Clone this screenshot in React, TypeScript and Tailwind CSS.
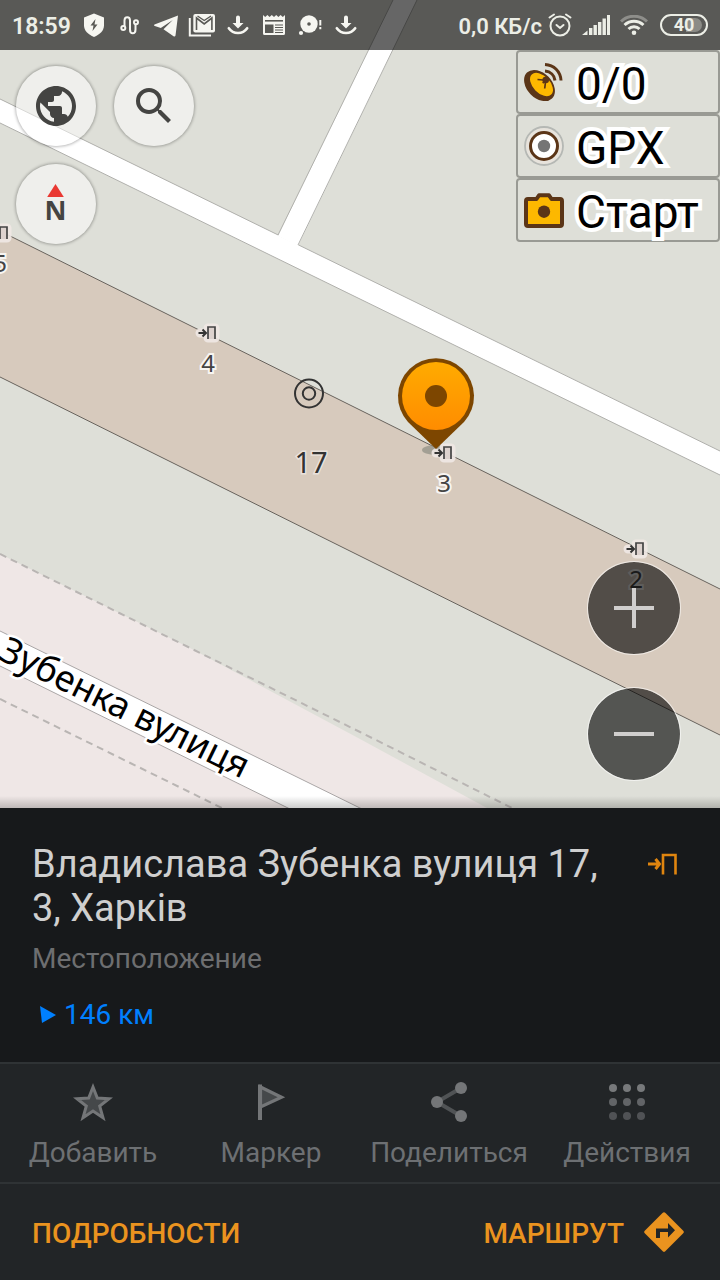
import React from 'react';
import { MdPublic, MdSearch } from 'react-icons/md';

const Icons = {
  Shield: () => <svg className="w-7 h-7" viewBox="0 0 28 28"><path d="M14 2.500l10 4v8c0 5-4 9-10 11.500C8 23.500 4 19.500 4 14.500v-8z" fill="#f6f6f1" /><path d="M15.500 8l-5 6.500h3L12.500 20l5-6.500h-3z" fill="#595955" /></svg>,
  Route: () => <svg className="w-7 h-7" viewBox="0 0 28 28" fill="none" stroke="#f6f6f1" strokeWidth="2"><circle cx="7.300" cy="17" r="2" /><path d="M8.500 15V9.500c0-4.500 5.500-4.500 5.500 0v9c0 5 5.500 5 5.500 0V13" /><circle cx="20" cy="11.300" r="2" /></svg>,
  Telegram: () => <svg className="w-7 h-7" viewBox="0 0 28 28"><path d="M26 4.500L2.500 13.500c-.8.500-.5 1.300.3 1.600l6 1.900 12-8.100-9.300 9.300 10 7c1 .6 1.700.3 2-.8z" fill="#f6f6f1" /></svg>,
  Mail: () => (
    <svg className="w-7 h-7" viewBox="0 0 28 28" fill="none">
      <path d="M1.800 7v17.600H23" stroke="#f6f6f1" strokeWidth="2" />
      <rect x="5.300" y="3" width="21.700" height="18.500" rx="2" fill="#f6f6f1" />
      <path d="M8.500 19V7l7.700 6 7.700-6V19" stroke="#595955" strokeWidth="1.600" />
      <path d="M9.500 5l6.700 4.500L23 5" stroke="#595955" strokeWidth="1.400" />
    </svg>
  ),
  Download: () => <svg className="w-7 h-7" viewBox="0 0 28 28"><path d="M12 6.500a2 2 0 0 1 4 0V12h3.500L14 17.500 8.500 12H12z" fill="#f6f6f1" /><path d="M4.800 17.200c4.500 6.300 13.900 6.300 18.400 0" fill="none" stroke="#f6f6f1" strokeWidth="2.600" strokeLinecap="round" /></svg>,
  News: () => (
    <svg className="w-7 h-7" viewBox="0 0 28 28">
      <path d="M3 4l2.200 2L7.400 4l2.200 2 2.200-2L14 6l2.200-2 2.200 2 2.200-2 2.200 2L25 4v18.500a1.500 1.500 0 0 1-1.500 1.500h-19A1.500 1.500 0 0 1 3 22.500z" fill="#f6f6f1" />
      <path d="M5 9.800h18" fill="none" stroke="#595955" strokeWidth="1.600" />
      <path d="M15 14h8M15 16.500h8M15 19h8M15 21.500h8" fill="none" stroke="#595955" />
      <path d="M5 13.500h8.500V22H5z" fill="#595955" />
    </svg>
  ),
  Disc: () => <svg className="w-7 h-7" viewBox="0 0 28 28" fill="#f6f6f1"><circle cx="13" cy="13" r="8.700" /><circle cx="13" cy="13" r="1.800" fill="#595955" /><circle cx="5" cy="22" r="2.100" /><path d="M23.300 9h2v5.500h-2zM23.300 16h2v2.200h-2z" /></svg>,
  Alarm: () => <svg className="w-6 h-6" viewBox="0 0 24 24" fill="none" stroke="#eceee6" strokeWidth="2" strokeLinecap="round"><circle cx="12" cy="13" r="9.500" /><path d="M8.500 12l3.500 3 3.500-3M1.500 4.500L6 1.500M22.500 4.500L18 1.500" /></svg>,
  Signal: () => <svg className="w-7 h-5" viewBox="0 0 28 20" fill="#eceee6"><path d="M0 20l5.500-4.500V20zM7 13h3.400v7H7zM11.500 10h3.400v10h-3.400zM16 7h3.400v13H16zM20.500 3.500h3.400V20h-3.400zM25 0h3v20h-3z" /></svg>,
  Wifi: () => (
    <svg className="w-7 h-5" viewBox="0 0 28 20" fill="none" stroke="#eceee6" strokeWidth="3">
      <path d="M1 6.500C8-.5 20-.5 27 6.500" stroke="#8e8e8a" />
      <path d="M4.500 10c5.500-5 13.500-5 19 0M8.500 14c3-3 8-3 11 0" />
      <circle cx="14" cy="17.700" r="2.300" fill="#eceee6" stroke="none" />
    </svg>
  ),
  Compass: () => <svg className="w-10 h-10" viewBox="0 0 40 40"><path d="M19.500 0l8.300 13H11.200z" fill="#e93832" /><text x="19.500" y="36" textAnchor="middle" fontFamily="Open Sans, sans-serif" fontWeight="700" fontSize="27" fill="#444442">N</text></svg>,
  Dish: () => (
    <svg className="w-10 h-10 shrink-0" viewBox="0 0 40 40" fill="none">
      <ellipse cx="15.500" cy="23.500" rx="18" ry="12.500" transform="rotate(46 15.500 23.500)" fill="#5b3517" />
      <ellipse cx="17.500" cy="22.500" rx="14" ry="8.500" transform="rotate(46 17.500 22.500)" fill="#fdb800" />
      <path d="M13.500 17.500l8.200.7-1 8.300M21.700 18.200l-3 3" stroke="#5b3517" strokeWidth="1.700" />
      <circle cx="21.700" cy="18" r="3.300" fill="#5b3517" />
      <path d="M21 2.500c9 .5 15.500 7 16 16M21 9c5.500.5 9.500 4.300 10 9.500" stroke="#5b3517" strokeWidth="3" />
    </svg>
  ),
  Record: () => (
    <svg className="w-10 h-10 shrink-0" viewBox="0 0 40 40">
      <circle cx="20" cy="20" r="19" fill="#e7e3dc" stroke="#b5b8b4" strokeWidth="1.800" />
      <circle cx="20" cy="20" r="13.500" fill="#fff" stroke="#5b3517" strokeWidth="3" />
      <circle cx="20" cy="20" r="6.200" fill="#757575" />
    </svg>
  ),
  Camera: () => (
    <svg className="w-10 h-10 shrink-0" viewBox="0 0 40 40">
      <path d="M4 9h8.500L15 5.300h10L27.500 9H36a2 2 0 0 1 2 2v23a2 2 0 0 1-2 2H4a2 2 0 0 1-2-2V11a2 2 0 0 1 2-2z" fill="#fdb800" stroke="#5b3517" strokeWidth="4" strokeLinejoin="round" />
      <circle cx="20" cy="21.700" r="6.200" fill="#5b3517" />
    </svg>
  ),
  Entrance: () => <svg className="w-8 h-6" viewBox="0 0 32 24" fill="none" stroke="#e0850f"><path d="M1 12h11M8.500 7l4 5-4 5" strokeWidth="3" /><path d="M16 22.500V3h12.500v19.500" strokeWidth="2.600" /></svg>,
  Star: () => <svg className="w-10 h-10" viewBox="0 0 40 40"><path d="M20 5l4.300 11 11.700.7-9.300 7.400 3.300 11.600-10-6.600-10 6.600 3.300-11.600L4 16.700l11.700-.7z" fill="#45484a" stroke="#747678" strokeWidth="3" /></svg>,
  Flag: () => <svg className="w-10 h-10" viewBox="0 0 40 40"><path d="M9.500 5l21 10.300-21 9.700z" fill="#45484a" stroke="#747678" strokeWidth="3.200" /><path d="M9 2.500V38" stroke="#747678" strokeWidth="4" /></svg>,
  Share: () => (
    <svg className="w-10 h-10" viewBox="0 0 40 40">
      <path d="M32 6L8 20l24 14" fill="none" stroke="#505355" strokeWidth="4" />
      <g fill="#747678"><circle cx="32" cy="6" r="6" /><circle cx="8" cy="20" r="6" /><circle cx="32" cy="34" r="6" /></g>
    </svg>
  ),
  Grid: () => (
    <svg className="w-10 h-10" viewBox="0 0 40 40">
      {[['#77797b', 6], ['#626467', 20], ['#505255', 34]].map(([color, y]) => (
        <g key={y} fill={color as string}><circle cx="6" cy={y} r="4" /><circle cx="20" cy={y} r="4" /><circle cx="34" cy={y} r="4" /></g>
      ))}
    </svg>
  ),
  Turn: () => <svg className="w-10 h-10" viewBox="0 0 40 40"><path d="M18.500 1a2 2 0 0 1 3 0L39 18.500a2 2 0 0 1 0 3L21.500 39a2 2 0 0 1-3 0L1 21.500a2 2 0 0 1 0-3z" fill="#ea931f" /><path d="M12 26v-9.500h12V11l7 7.300-7 7.200V20h-8v6z" fill="#222527" /></svg>
};

const doors = [
  { x: 0, y: 233, label: '5' },
  { x: 208, y: 333, label: '4' },
  { x: 444, y: 453, label: '3' },
  { x: 636, y: 549, label: '2' }
];

const MapCanvas = () => (
  <svg className="absolute inset-0 w-full h-full" viewBox="0 0 720 808" preserveAspectRatio="xMinYMin slice" fontFamily="Noto Sans, sans-serif">
    <defs>
      <linearGradient id="pin" x1="0" y1="0" x2="0" y2="1">
        <stop offset="0" stopColor="#ffab00" />
        <stop offset="1" stopColor="#ff8c00" />
      </linearGradient>
    </defs>
    <rect width="720" height="808" fill="#dedfd8" />

    {/* Residential area and street */}
    <path d="M0 554L190 648 360 739 487 808H0z" fill="#efe7e6" />
    <path d="M0 554L360 732 516 810M0 699L226 810" fill="none" stroke="#b9b5b3" strokeWidth="2" strokeDasharray="7 5" />
    <path d="M-2 630L362 809H290L-2 665z" fill="#fff" stroke="#aaa6a6" />

    {/* Building */}
    <path d="M-2 230L722 590V736L-2 376z" fill="#d7cabd" stroke="#68635d" />

    {/* Service roads */}
    <path d="M-2 98L722 452V476L-2 122z" fill="#fff" stroke="#b0b0ac" />
    <path d="M393 0L278 236 298 246 417 0z" fill="#fff" />
    <path d="M393 0L278 235M417 0L298 245" stroke="#b0b0ac" />

    <text transform="translate(242 779) rotate(26.200)" textAnchor="end" fontSize="36" fill="#000" stroke="#fff" strokeWidth="5" paintOrder="stroke">Зубенка вулиця</text>

    <g fill="none" stroke="#333" strokeWidth="2">
      <circle cx="309" cy="393.500" r="14" />
      <circle cx="309" cy="393.500" r="6.200" />
    </g>
    <text x="311" y="473" textAnchor="middle" fontSize="29" fill="#333" stroke="#e9e2dc" strokeWidth="3" paintOrder="stroke">17</text>

    <ellipse cx="436" cy="450" rx="14" ry="5" fill="#8d8d83" opacity=".7" />
    {doors.map((d) => (
      <g key={d.label}>
        <g transform={`translate(${d.x} ${d.y})`} fill="none">
          <path d="M-8 0h6M0 5V-5h7V5z" stroke="#efe8e4" strokeWidth="9" strokeLinejoin="round" strokeLinecap="round" opacity=".9" />
          <path d="M0 6V-6h7v12z" fill="#ddd2ce" />
          <path d="M-9.500 0h6M-5.500-3.500L-2 0l-3.500 3.500" stroke="#333" strokeWidth="2" />
          <path d="M0 6V-6h7v12" stroke="#444" strokeWidth="1.700" />
        </g>
        <text x={d.x} y={d.y + 39} textAnchor="middle" fontSize="24" fill="#444" stroke="#f7f5f2" strokeWidth="4" paintOrder="stroke">{d.label}</text>
      </g>
    ))}

    <path d="M436 449L408 422a38 38 0 1 1 56 0z" fill="#7d4600" />
    <circle cx="436" cy="396" r="34" fill="url(#pin)" />
    <circle cx="436" cy="396" r="11" fill="#7d4600" />
  </svg>
);

const notifications = [Icons.Shield, Icons.Route, Icons.Telegram, Icons.Mail, Icons.Download, Icons.News, Icons.Disc, Icons.Download];

const widgets = [
  { icon: Icons.Dish, text: '0/0' },
  { icon: Icons.Record, text: 'GPX' },
  { icon: Icons.Camera, text: 'Старт' }
];

const actions = [
  { icon: Icons.Star, text: 'Добавить' },
  { icon: Icons.Flag, text: 'Маркер' },
  { icon: Icons.Share, text: 'Поделиться' },
  { icon: Icons.Grid, text: 'Действия' }
];

const roundButton = 'flex w-20 h-20 items-center justify-center rounded-full bg-white/50 text-[#444442] shadow-[0_0_3px_1px_rgba(0,0,0,0.28)]';
const zoomButton = 'flex w-[94px] h-[94px] items-center justify-center rounded-full border border-white/60 bg-black/62 bg-clip-padding';

const App: React.FC = () => {
  return (
    <div className="flex min-h-screen flex-col bg-[#17191b] font-['Roboto',sans-serif]">
      <main className="relative flex flex-1 flex-col overflow-hidden">
        <MapCanvas />

        {/* Status bar */}
        <header className="relative flex h-[50px] items-center justify-between bg-black/60 px-3 text-[#eceee6]">
          <div className="flex items-center">
            <span className="w-16 pt-1 text-[23px] leading-7 font-semibold">18:59</span>
            {notifications.map((Icon, i) => (
              <span key={i} className="flex w-9 justify-center"><Icon /></span>
            ))}
          </div>
          <div className="flex items-center">
            <span className="mr-1.5 pt-1 text-[22px] leading-7 font-semibold">0,0 КБ/с</span>
            <Icons.Alarm />
            <span className="ml-2.5 mr-2.5"><Icons.Signal /></span>
            <Icons.Wifi />
            <span className="relative ml-3 flex h-[22px] w-12 items-center justify-center overflow-hidden rounded-full border-2 border-[#eceee6] text-lg font-bold">
              <span className="absolute inset-y-0.5 right-1 w-4 rounded-r-full bg-[#8b8b86]" />
              <span className="relative">40</span>
            </span>
          </div>
        </header>

        <div className="relative flex items-start justify-between">
          <div className="grid grid-cols-2 gap-[18px] pl-4 pt-4">
            <button className={roundButton} aria-label="Карта"><MdPublic size={48} /></button>
            <button className={roundButton} aria-label="Поиск"><MdSearch size={48} /></button>
            <button className={roundButton} aria-label="Компас"><Icons.Compass /></button>
          </div>
          <div className="w-[204px]">
            {widgets.map(({ icon: Icon, text }) => (
              <button key={text} className="flex h-16 w-full items-center gap-3 rounded border-2 border-[#999a94] bg-[#dedfd8] pl-1.5 text-[46px] leading-[56px] text-black">
                <Icon />
                <span className="pt-1 [-webkit-text-stroke:8px_white] [paint-order:stroke]">{text}</span>
              </button>
            ))}
          </div>
        </div>

        <div className="relative mt-auto mr-[39px] mb-[27px] flex flex-col gap-8 self-end">
          <button className={zoomButton} aria-label="Приблизить">
            <svg className="w-10 h-10" viewBox="0 0 40 40"><path d="M0 20h40M20 0v40" stroke="#d0cecd" strokeWidth="4" /></svg>
          </button>
          <button className={zoomButton} aria-label="Отдалить">
            <svg className="w-10 h-10" viewBox="0 0 40 40"><path d="M0 20h40" stroke="#d0cecd" strokeWidth="4" /></svg>
          </button>
        </div>
        <div className="absolute inset-x-0 bottom-0 h-3 bg-linear-to-t from-black/20 to-transparent" />
      </main>

      {/* Place card */}
      <section className="flex items-start justify-between pl-8 pr-[41px] pt-[34px] pb-[30px]">
        <div>
          <h1 className="text-[38px] leading-[44px] text-[#cfcfcf]">Владислава Зубенка вулиця 17,<br />3, Харків</h1>
          <p className="mt-3 text-[28px] leading-[34px] text-[#6d6e70]">Местоположение</p>
          <p className="mt-[22px] flex items-center text-[28px] leading-[34px] text-[#0080ff]">
            <svg className="w-8 h-8" viewBox="0 0 32 32"><path d="M8 7l16 9-14 8z" fill="#0080ff" /></svg>
            146 км
          </p>
        </div>
        <span className="mt-2.5"><Icons.Entrance /></span>
      </section>

      <nav className="grid grid-cols-4 border-t-2 border-[#2f3335] bg-[#222527] px-1">
        {actions.map(({ icon: Icon, text }) => (
          <button key={text} className="flex h-[118px] flex-col items-center pt-[18px] text-[28px] leading-[30px] text-[#6d7073]">
            <Icon />
            <span className="mt-4">{text}</span>
          </button>
        ))}
      </nav>

      <footer className="flex h-[98px] items-center justify-between border-t-2 border-[#2f3335] bg-[#222527] pl-8 pr-9 text-[28px] leading-8 font-medium text-[#ea931f]">
        <button className="pt-1">ПОДРОБНОСТИ</button>
        <button className="flex items-center gap-5"><span className="pt-1">МАРШРУТ</span><Icons.Turn /></button>
      </footer>
    </div>
  );
};

export default App;
